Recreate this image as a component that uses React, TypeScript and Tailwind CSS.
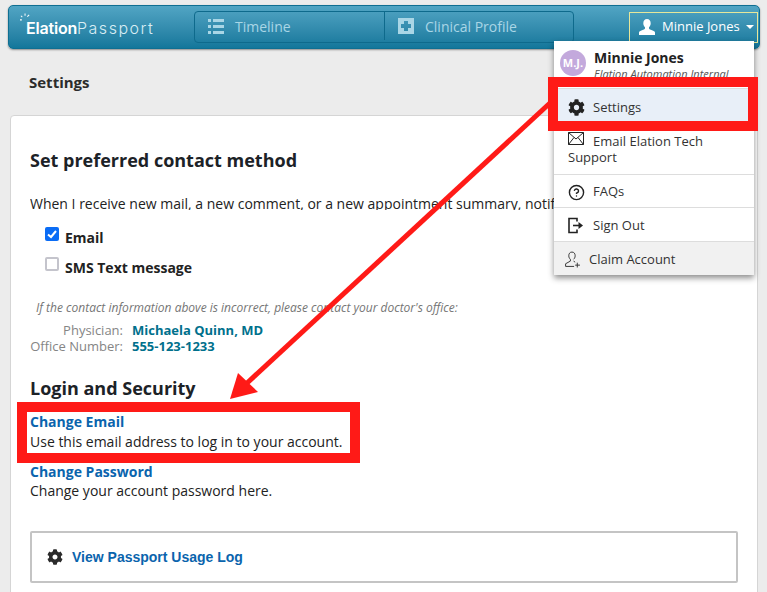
import React from "react";
import { CircleHelp } from "lucide-react";
import { FaCog } from "react-icons/fa";

const MenuRow = ({ icon, children, className = "h-[33px]" }: { icon: React.ReactNode; children: React.ReactNode; className?: string }) => (
  <div className={`flex items-center border-t border-[#ddd] pl-[14px] pt-[2px] text-[#333] ${className}`}>
    <span className="flex w-[25px]">{icon}</span>
    {children}
  </div>
);

export default function App() {
  return (
    <div className="relative h-[592px] w-[767px] overflow-hidden bg-[#ececec] text-[14px] text-[#222] font-['Open_Sans',sans-serif]">
      {/* Top bar */}
      <header className="absolute left-[8px] top-[5px] flex h-[44px] w-[752px] items-center rounded-[5px] border border-[#0f6f92] bg-gradient-to-b from-[#51a5c4] to-[#12779b] shadow-[0_1px_2px_rgba(0,0,0,0.4)]">
        <div className="relative ml-[17px] w-[168px] whitespace-nowrap pt-[2px] text-[16px] leading-none font-['Inter',sans-serif]">
          <svg viewBox="0 0 12 12" className="absolute -left-[6px] -top-[5px] h-[11px] w-[11px]" stroke="white" strokeWidth="1.1">
            <path d="M2 7.500H0M2.500 4.500 1 3M5.500 3V.5M8 4 10 2" />
          </svg>
          <span className="font-semibold tracking-[-0.2px] text-white">Elation</span>
          <span className="font-light tracking-[1.5px] text-[#d9edf4]">Passport</span>
        </div>
        <nav className="flex h-[32px] w-[380px] rounded-[4px] border border-[#0e6a8c] pb-[2px] text-[14px] text-[#a9d6e6]">
          <div className="flex w-[190px] items-center border-r border-[#0e6a8c] pl-[13px]">
            <svg viewBox="0 0 16 15" className="mr-[11px] h-[15px] w-[16px]" fill="#a9d6e6">
              <path d="M0 0h3v3H0zM5 0h11v3H5zM0 6h3v3H0zM5 6h11v3H5zM0 12h3v3H0zM5 12h11v3H5z" />
            </svg>
            Timeline
          </div>
          <div className="flex flex-1 items-center pl-[13px]">
            <svg viewBox="0 0 16 16" className="mr-[11px] h-[16px] w-[16px]">
              <path fillRule="evenodd" fill="#a9d6e6" d="M0 0h16v16H0zM6 3v3H3v4h3v3h4v-3h3V6h-3V3z" />
            </svg>
            Clinical Profile
          </div>
        </nav>
        <div className="ml-[55px] flex h-[31px] w-[129px] items-center border border-[#e6e79a] pl-[9px] text-[13px] text-white">
          <svg viewBox="0 0 16 16" className="mr-[7px] h-[16px] w-[16px]" fill="white">
            <path d="M8 0c2.300 0 3.700 1.700 3.700 4.200 0 1.700-.7 3.200-1.700 4.100v1.200c.3.800 1.300 1.100 3 1.700 1.600.6 3 1.200 3 2.300V16H0v-2.500c0-1.100 1.400-1.700 3-2.300 1.700-.6 2.700-.9 3-1.700V8.300C5 7.400 4.300 5.900 4.300 4.200 4.300 1.700 5.700 0 8 0z" />
          </svg>
          Minnie Jones
          <span className="ml-[6px] h-0 w-0 border-x-[4px] border-t-[4px] border-x-transparent border-t-white" />
        </div>
      </header>

      <h1 className="absolute left-[29px] top-[72px] text-[15px] leading-[20px] font-bold text-[#2b2b2b]">Settings</h1>

      {/* Main card */}
      <main className="absolute left-[10px] top-[115px] h-[490px] w-[748px] rounded-[4px] border border-[#d5d5d5] bg-white pl-[19px] pt-[31px]">
        <h2 className="text-[18px] leading-[26px] font-bold text-[#1c2227]">Set preferred contact method</h2>
        {/* the reference has this line cut off just under the baseline */}
        <p className="mt-[21px] h-[16px] overflow-hidden whitespace-nowrap leading-[20px]">
          When I receive new mail, a new comment, or a new appointment summary, notify me by:
        </p>
        <div className="mt-[17px] ml-[15px] flex h-[20px] items-center font-bold">
          <span className="mr-[6px] mb-[6px] flex h-[14px] w-[14px] items-center justify-center rounded-[2px] bg-[#0a6cf5]">
            <svg viewBox="0 0 14 14" className="h-[14px] w-[14px]" fill="none" stroke="white" strokeWidth="2">
              <path d="M3 7.500 6 10l5-6" />
            </svg>
          </span>
          Email
        </div>
        <div className="mt-[10px] ml-[15px] flex h-[20px] items-center font-bold">
          <span className="mr-[6px] mb-[6px] h-[14px] w-[14px] rounded-[2px] border-2 border-[#c4c4cc] bg-white" />
          SMS Text message
        </div>
        <p className="mt-[22px] ml-[6px] text-[12px] leading-[18px] italic text-[#757575]">
          If the contact information above is incorrect, please contact your doctor's office:
        </p>
        <div className="mt-[5px] grid grid-cols-[93px_auto] gap-x-[9px] text-[13px] leading-[16px]">
          <span className="whitespace-nowrap text-right text-[#858585]">Physician:</span>
          <span className="font-bold text-[#00708c]">Michaela Quinn, MD</span>
          <span className="whitespace-nowrap text-right text-[#858585]">Office Number:</span>
          <span className="font-bold text-[#00708c]">555-123-1233</span>
        </div>
        <h2 className="mt-[21px] text-[18px] leading-[26px] font-bold text-[#1c2227]">Login and Security</h2>
        <div className="mt-[11px] leading-[20px]">
          <a className="block font-bold text-[#0a64ad]">Change Email</a>
          <p>Use this email address to log in to your account.</p>
        </div>
        <div className="mt-[10px] leading-[19px]">
          <a className="block font-bold text-[#0a64ad]">Change Password</a>
          <p>Change your account password here.</p>
        </div>
        <div className="mt-[31px] flex h-[52px] w-[708px] items-center rounded-[2px] border-2 border-[#c4c4c4] pl-[15px]">
          <FaCog className="mr-[9px] h-[16px] w-[16px] text-[#2b2b2b]" />
          <a className="text-[14px] font-bold text-[#0a64ad] font-['Liberation_Sans',sans-serif]">View Passport Usage Log</a>
        </div>
      </main>

      {/* Dropdown */}
      <div className="absolute left-[554px] top-[41px] w-[200px] bg-white text-[13px] shadow-[0_3px_6px_rgba(0,0,0,0.45)]">
        <div className="flex h-[47px] items-start pl-[6px] pt-[8px]">
          <span className="mt-[1px] mr-[8px] flex h-[26px] w-[26px] items-center justify-center rounded-full bg-[#c3a9dc] text-[11px] font-bold text-white">M.J.</span>
          <div>
            <div className="text-[14px] leading-[18px] font-bold text-[#222]">Minnie Jones</div>
            <div className="text-[11px] leading-[14px] whitespace-nowrap italic text-[#555]">Elation Automation Internal</div>
          </div>
        </div>
        <div className="flex h-[33px] items-center border-t border-[#ddd] bg-[#e8eff8] pl-[14px] pt-[5px] text-[#333]">
          <FaCog className="mr-[8px] h-[17px] w-[17px] text-[#222]" />
          Settings
        </div>
        <div className="h-[53px] border-t border-[#ddd] px-[14px] pt-[10px] leading-[16px] text-[#333]">
          <svg viewBox="0 0 16 13" className="mr-[9px] inline-block h-[13px] w-[16px] align-[1px]" fill="none" stroke="#222" strokeWidth="1">
            <path d="M.5.500h15v12H.5zM.5.500 8 7l7.500-6.500M.5 12.500 6 5.500M15.500 12.500 10 5.500" />
          </svg>
          Email Elation Tech Support
        </div>
        <MenuRow icon={<CircleHelp className="h-[17px] w-[17px] text-[#222]" strokeWidth={2} />}>FAQs</MenuRow>
        <MenuRow
          className="h-[34px]"
          icon={
            <svg viewBox="0 0 16 16" className="h-[17px] w-[16px]" fill="none" stroke="#222" strokeWidth="1.6">
              <path d="M9 4V1H1v14h8v-3" />
              <path d="M5 8h6" />
              <path d="M10.500 4.500 15 8l-4.500 3.500z" fill="#222" stroke="none" />
            </svg>
          }
        >
          Sign Out
        </MenuRow>
        <div className="flex h-[34px] items-center border-t border-[#ddd] bg-[#f1f1f1] pl-[10px] pt-[2px] text-[#333]">
          <svg viewBox="0 0 16 16" className="mr-[8px] h-[17px] w-[17px]" fill="none" stroke="#333" strokeWidth="0.9">
            <path d="M7.500 1C5.500 1 4.500 2.500 4.500 4.500c0 1.500.7 2.700 1.500 3.300v1.700L1.500 12v2.500h8M9 7.800c.8-.6 1.500-1.800 1.500-3.300C10.500 2.500 9.500 1 7.500 1M9 9.500l1.500 1" />
            <path d="M12.500 11v4.500M10.500 13.300h4.500" />
          </svg>
          Claim Account
        </div>
      </div>

      {/* Annotations */}
      <div className="absolute left-[548px] top-[77px] h-[54px] w-[210px] border-[10px] border-[#ff1a17]" />
      <div className="absolute left-[17px] top-[402px] h-[61px] w-[343px] border-[10px] border-[#ff1a17]" />
      <svg className="absolute left-0 top-0 h-[592px] w-[767px]" viewBox="0 0 767 592" fill="#ff1a17">
        <path d="M550 103 246 384" stroke="#ff1a17" strokeWidth="5" />
        <path d="M230 399 238 373 258 392Z" />
      </svg>
    </div>
  );
}
